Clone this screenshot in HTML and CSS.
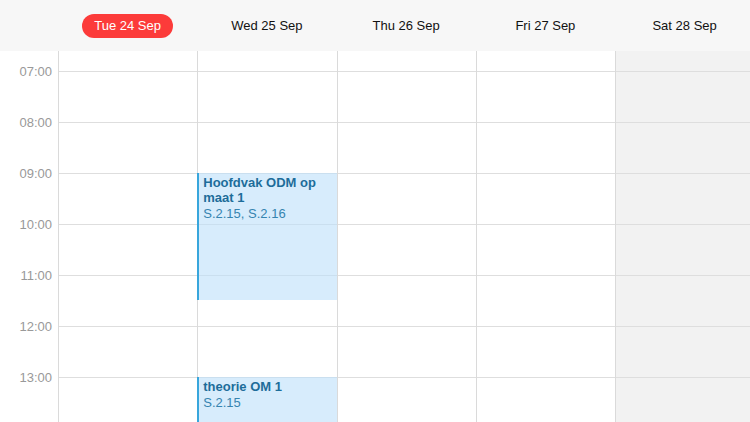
FILE: index.html
```html
<!DOCTYPE html>
<html>
<head>
<meta charset="utf-8">
<link rel="stylesheet" href="styles.css">
</head>
<body>
<div class="page">
  <div class="header">
    <div class="gutter"></div>
    <div class="day-head"><span class="today">Tue 24 Sep</span></div>
    <div class="day-head">Wed 25 Sep</div>
    <div class="day-head">Thu 26 Sep</div>
    <div class="day-head">Fri 27 Sep</div>
    <div class="day-head">Sat 28 Sep</div>
  </div>
  <div class="body">
    <div class="gutter times">
      <div class="time">07:00</div>
      <div class="time">08:00</div>
      <div class="time">09:00</div>
      <div class="time">10:00</div>
      <div class="time">11:00</div>
      <div class="time">12:00</div>
      <div class="time">13:00</div>
    </div>
    <div class="day"></div>
    <div class="day">
      <div class="event" style="top:122px;height:127px">
        <div class="ev-title">Hoofdvak ODM op maat 1</div>
        <div class="ev-loc">S.2.15, S.2.16</div>
      </div>
      <div class="event" style="top:326px;height:80px">
        <div class="ev-title">theorie OM 1</div>
        <div class="ev-loc">S.2.15</div>
      </div>
    </div>
    <div class="day"></div>
    <div class="day"></div>
    <div class="day weekend"></div>
  </div>
</div>
</body>
</html>
```
FILE: styles.css
```css
html, body {
  margin: 0;
  padding: 0;
  overflow: hidden;
  background: #fff;
}
.page {
  width: 754px;
  height: 422px;
  font-family: "Liberation Sans", Arial, sans-serif;
  font-size: 13px;
  overflow: hidden;
}
.header {
  display: grid;
  grid-template-columns: 58px repeat(5, 139.25px);
  height: 51px;
  background: #f7f7f7;
}
.day-head {
  display: flex;
  align-items: center;
  justify-content: center;
  color: #111;
}
.today {
  background: #fc3b3a;
  color: #fff;
  border-radius: 12px;
  height: 24px;
  line-height: 24px;
  padding: 0 12px;
  width: 67px;
  text-align: center;
}
.body {
  display: grid;
  grid-template-columns: 58px repeat(5, 139.25px);
  height: 371px;
}
.times {
  padding-top: 12px;
}
.time {
  height: 51px;
  line-height: 17px;
  text-align: right;
  padding-right: 6px;
  color: #999;
}
.day {
  position: relative;
  border-left: 1px solid #dadada;
  background: repeating-linear-gradient(to bottom,
    transparent 0, transparent 20px,
    #dedede 20px, #dedede 21px,
    transparent 21px, transparent 51px);
}
.weekend {
  background-color: #f2f2f2;
}
.event {
  position: absolute;
  left: -1px;
  right: 0;
  background: rgba(190, 225, 250, 0.62);
  border-left: 2px solid #38a6dc;
  padding: 2px 6px 0 4px;
  box-sizing: border-box;
}
.ev-title {
  font-weight: bold;
  color: #1d6d9a;
  line-height: 15px;
}
.ev-loc {
  color: #3584b0;
  line-height: 15px;
  margin-top: 1px;
}
```
